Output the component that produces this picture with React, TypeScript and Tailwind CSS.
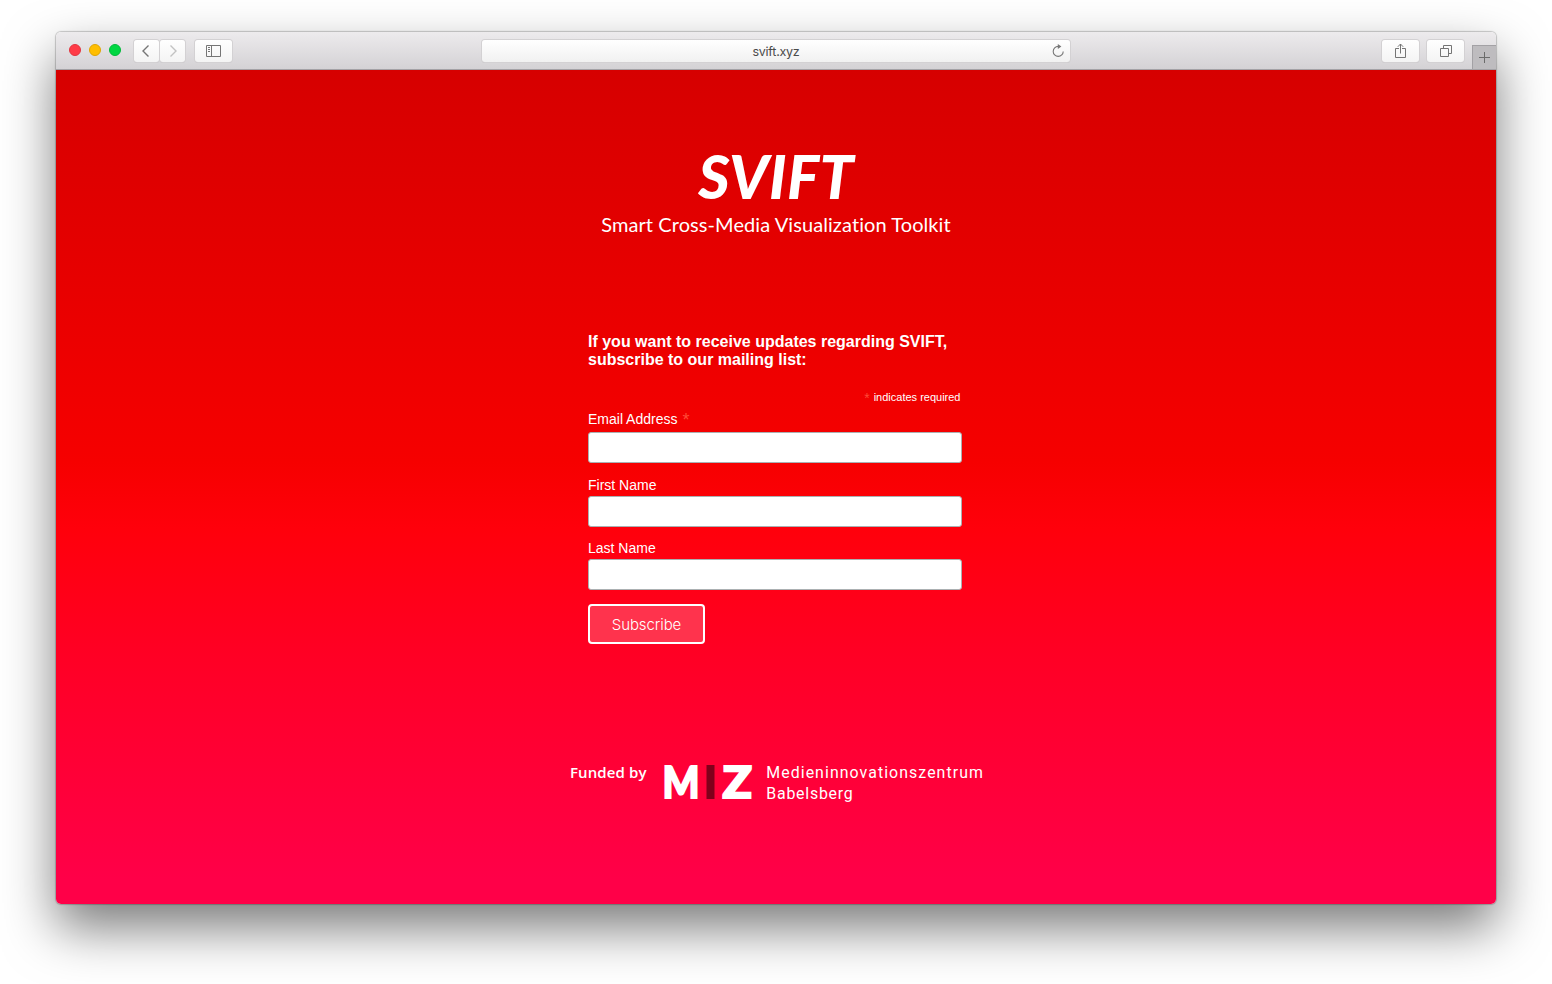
import type { ReactNode } from 'react'

const LIGHTS = [
  'bg-[#ff3b47] border-[#e2343f]',
  'bg-[#ffbe00] border-[#e0a500]',
  'bg-[#00d742] border-[#00b93a]',
]

type ToolButtonProps = {
  className: string
  label: string
  children: ReactNode
}

function ToolButton({ className, label, children }: ToolButtonProps) {
  return (
    <button
      aria-label={label}
      className={`flex h-[22px] items-center justify-center bg-linear-to-b from-white to-[#f4f4f4] shadow-[0_0_0_1px_#d3d1d3,0_1px_0_0_#bbb9bb] ${className}`}
    >
      {children}
    </button>
  )
}

function Toolbar() {
  return (
    <header className="flex h-[38px] items-start border-b border-[#a3a1a5] bg-linear-to-b from-[#edebed] to-[#d4d2d5] pt-2">
      <div className="ml-[13px] mt-1 flex gap-2">
        {LIGHTS.map((color) => (
          <span key={color} className={`size-3 rounded-full border ${color}`} />
        ))}
      </div>

      <div className="ml-[13px] flex gap-px">
        <ToolButton label="Back" className="w-[25px] rounded-[3px] pr-0.5">
          <svg width="10" height="14" viewBox="0 0 10 14" fill="none" stroke="#757575" strokeWidth="1.4">
            <path d="M7.5 1.5 2 7l5.5 5.5" />
          </svg>
        </ToolButton>
        <ToolButton label="Forward" className="w-[25px] rounded-[3px]">
          <svg width="10" height="14" viewBox="0 0 10 14" fill="none" stroke="#c2c2c2" strokeWidth="1.4">
            <path d="M2.5 1.5 8 7l-5.5 5.5" />
          </svg>
        </ToolButton>
      </div>
      <ToolButton label="Sidebar" className="ml-2.5 w-[37px] rounded-[3px]">
        <svg width="15" height="12" viewBox="0 0 15 12" fill="none" stroke="#757575">
          <path d="M.5.5h14v11H.5zM5.5.5v11M2 2.5h2M2 4.5h2M2 6.5h2" />
        </svg>
      </ToolButton>

      <div className="ml-[250px] flex h-[22px] w-[588px] items-center rounded-[3px] bg-linear-to-b from-white to-[#f1f1f1] pl-[19px] pr-[5px] shadow-[0_0_0_1px_#d3d1d3,0_1px_0_0_#b7b5b7]">
        <span className="flex-1 pt-0.5 text-center font-[Inter,sans-serif] text-[12.5px] leading-none tracking-[-0.25px] text-[#4b4b4b]">svift.xyz</span>
        <svg width="14" height="14" viewBox="0 0 14 14" fill="none" stroke="#777" strokeWidth="1.1">
          <path d="M7.2 2.4A5 5 0 1 0 12.2 7.4" />
          <path d="M6.8 0v5l3.6-2.5z" fill="#777" stroke="none" />
        </svg>
      </div>

      <ToolButton label="Share" className="ml-auto w-[37px] rounded-[3px]">
        <svg width="12" height="16" viewBox="0 0 12 16" fill="none" stroke="#757575">
          <path d="M4 5.5H.5v9h10v-9H7M5.5 10.5V1M2.8 3.8 5.5 1l2.7 2.8" />
        </svg>
      </ToolButton>
      <ToolButton label="Tabs" className="ml-2 w-[37px] rounded-[3px]">
        <svg width="12" height="12" viewBox="0 0 12 12" fill="none" stroke="#757575">
          <path d="M.5 3.5h8v8h-8zM3.5 3.5v-3h8v8h-3" />
        </svg>
      </ToolButton>
      <button aria-label="New tab" className="ml-2 mt-[5px] flex h-6 w-6 items-center justify-center border-l border-t border-[#a3a1a5] bg-[#bebcbf]">
        <svg width="11" height="11" viewBox="0 0 11 11" stroke="#6b6b6b">
          <path d="M5.5 0v11M0 5.5h11" />
        </svg>
      </button>
    </header>
  )
}

type FieldProps = {
  id: string
  label: string
  type?: string
  required?: boolean
}

function Field({ id, label, type = 'text', required }: FieldProps) {
  return (
    <div className="flex flex-col">
      <label htmlFor={id} className={`text-sm leading-[22px] ${required ? 'mb-0.5' : ''}`}>
        {label}
        {required && <span className="relative top-0.5 ml-[5px] text-lg leading-none text-[#ff4a36]">*</span>}
      </label>
      <input
        id={id}
        type={type}
        className="h-[31px] w-[374px] rounded-[3px] border border-[#abb0b2] bg-white px-2 text-sm text-black"
      />
    </div>
  )
}

function SignupForm() {
  return (
    <form className="w-[374px] font-['Liberation_Sans',Arial,sans-serif]">
      <h2 className="whitespace-nowrap text-base font-bold leading-[18px]">
        If you want to receive updates regarding SVIFT,
        <br />
        subscribe to our mailing list:
      </h2>
      <p className="mt-[20px] pr-[1.5px] text-right text-[11px] leading-4">
        <span className="relative top-0.5 mr-1 text-sm leading-none text-[#ff4a36]">*</span>indicates required
      </p>
      <div className="mt-[3px] flex flex-col gap-2.5">
        <Field id="email" label="Email Address" type="email" required />
        <div className="mt-px">
          <Field id="fname" label="First Name" />
        </div>
        <Field id="lname" label="Last Name" />
      </div>
      <button
        type="button"
        className="mt-[14px] h-10 w-[117px] rounded-[4px] border-2 border-white bg-[#ff334d] pt-[3px] font-[Inter,sans-serif] text-[15px] font-light tracking-[-0.1px]"
      >
        Subscribe
      </button>
    </form>
  )
}

function Funding() {
  return (
    <footer className="flex h-[50px] w-[412px] items-start whitespace-nowrap">
      <span className="w-[94px] shrink-0 font-['Open_Sans',sans-serif] text-[15px] font-semibold leading-5 tracking-[0.1px]">Funded by</span>
      <svg width="90" height="42" viewBox="0 0 90 42" overflow="visible" className="shrink-0 font-[Lato,sans-serif]" fontWeight="900" fontSize="44.5">
        <text x="-1.5" y="36" textLength="37" lengthAdjust="spacingAndGlyphs" fill="#fff" stroke="#fff" strokeWidth="2">M</text>
        <rect x="42.5" y="3" width="8" height="34" fill="#80001b" />
        <text x="58.5" y="36" textLength="29.5" lengthAdjust="spacingAndGlyphs" fill="#fff" stroke="#fff" strokeWidth="2">Z</text>
      </svg>
      <svg width="222" height="48" viewBox="0 0 222 48" className="ml-3 shrink-0 font-[Roboto,sans-serif]" fontSize="17.3" fill="#fff">
        <text transform="scale(0.92 1)" x="0.3" y="15.5" textLength="235.5">Medieninnovationszentrum</text>
        <text transform="scale(0.92 1)" x="0.3" y="37" textLength="94">Babelsberg</text>
      </svg>
    </footer>
  )
}

export default function App() {
  return (
    <div className="h-[984px] w-[1552px] overflow-hidden bg-white px-14 pt-8">
      <div className="flex h-[872px] flex-col overflow-hidden rounded-[5px] shadow-[0_0_1px_1px_rgba(0,0,0,0.2),0_24px_52px_rgba(0,0,0,0.52)]">
        <Toolbar />
        <main className="flex flex-1 flex-col items-center bg-[linear-gradient(180deg,#d60000_0%,#f60000_47%,#ff000b_55%,#ff0024_70%,#ff0048_97%)] text-white">
          <div className="flex flex-col items-center pt-[75px] font-[Lato,sans-serif]">
            <h1 className="text-[60.5px] font-black italic leading-[62px] tracking-[0.4px]">SVIFT</h1>
            <p className="mt-[4px] text-[20px] leading-[26px] [font-variant-ligatures:none] tracking-[0.08px]">Smart Cross-Media Visualization Toolkit</p>
          </div>
          <div className="mt-[96px] -ml-0.5">
            <SignupForm />
          </div>
          <div className="mt-[118px]">
            <Funding />
          </div>
        </main>
      </div>
    </div>
  )
}
